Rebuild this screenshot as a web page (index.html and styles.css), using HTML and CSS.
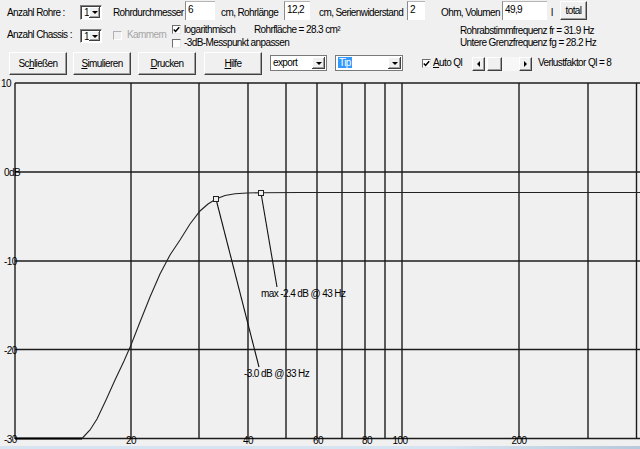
FILE: index.html
```html
<!DOCTYPE html>
<html lang="de">
<head>
<meta charset="utf-8">
<title>Bassreflex Simulation</title>
<link rel="stylesheet" href="styles.css">
</head>
<body>
<div class="toolbar">
  <div class="row r1">
    <span class="lab c-rohre">Anzahl Rohre :</span>
    <div class="combo small"><span class="cval">1</span><span class="dbtn"><i class="arr"></i></span></div>
    <span class="lab c-durch">Rohrdurchmesser</span>
    <span class="field f-durch">6</span>
    <span class="lab c-laenge">cm, Rohrlänge</span>
    <span class="field f-laenge">12,2</span>
    <span class="lab c-serie">cm, Serienwiderstand</span>
    <span class="field f-serie">2</span>
    <span class="lab c-ohm">Ohm, Volumen</span>
    <span class="field f-vol">49,9</span>
    <span class="lab c-l">l</span>
    <button class="btn b-total">total</button>
  </div>
  <div class="row r2">
    <span class="lab c-chassis">Anzahl Chassis :</span>
    <div class="combo small"><span class="cval">1</span><span class="dbtn"><i class="arr"></i></span></div>
    <span class="chk dis c-kam-box"></span>
    <span class="lab c-kam">Kammern</span>
    <div class="col col-mid">
      <div class="line">
        <span class="chk"><svg width="7" height="7" viewBox="0 0 7 7"><path d="M0.8 3.4 L2.6 5.4 L6.2 1.2" fill="none" stroke="#000" stroke-width="1.5"/></svg></span>
        <span class="lab c-log">logarithmisch</span>
        <span class="lab">Rohrfläche = 28.3 cm²</span>
      </div>
      <div class="line">
        <span class="chk"></span>
        <span class="lab c-mess">-3dB-Messpunkt anpassen</span>
      </div>
    </div>
    <div class="col col-right">
      <div class="line2">Rohrabstimmfrequenz fr = 31.9 Hz</div>
      <div class="line2">Untere Grenzfrequenz fg = 28.2 Hz</div>
    </div>
  </div>
  <div class="row r3">
    <button class="btn b-big b-schl">Sc<u>h</u>ließen</button>
    <button class="btn b-big b-sim"><u>S</u>imulieren</button>
    <button class="btn b-big b-dru"><u>D</u>rucken</button>
    <button class="btn b-big b-hil"><u>H</u>ilfe</button>
    <div class="combo wide w-export"><span class="cval">export</span><span class="dbtn"><i class="arr"></i></span></div>
    <div class="combo wide w-tip"><span class="cval"><span class="sel">Tip</span></span><span class="dbtn"><i class="arr"></i></span></div>
    <span class="chk c-auto"><svg width="7" height="7" viewBox="0 0 7 7"><path d="M0.8 3.4 L2.6 5.4 L6.2 1.2" fill="none" stroke="#000" stroke-width="1.5"/></svg></span>
    <span class="lab c-autolab"><u>A</u>uto Ql</span>
    <div class="scroll">
      <span class="sbtn"><i class="tri-l"></i></span>
      <span class="strack s1"></span>
      <span class="sthumb"></span>
      <span class="strack s2"></span>
      <span class="sbtn"><i class="tri-r"></i></span>
    </div>
    <span class="lab c-verl">Verlustfaktor Ql = 8</span>
  </div>
</div>

<svg class="chart" width="640" height="370" viewBox="0 76 640 370">
  <g class="grid">
    <line x1="15" y1="83" x2="640" y2="83"/>
    <line x1="15" y1="172" x2="640" y2="172"/>
    <line x1="15" y1="261" x2="640" y2="261"/>
    <line x1="15" y1="349.5" x2="640" y2="349.5"/>
    <line x1="15" y1="438.5" x2="640" y2="438.5"/>
    <line x1="15" y1="83" x2="15" y2="439"/>
    <line x1="131" y1="83" x2="131" y2="439"/>
    <line x1="199" y1="83" x2="199" y2="439"/>
    <line x1="248" y1="83" x2="248" y2="439"/>
    <line x1="286" y1="83" x2="286" y2="439"/>
    <line x1="317" y1="83" x2="317" y2="439"/>
    <line x1="342" y1="83" x2="342" y2="439"/>
    <line x1="365" y1="83" x2="365" y2="439"/>
    <line x1="385" y1="83" x2="385" y2="439"/>
    <line x1="402" y1="83" x2="402" y2="439"/>
    <line x1="519" y1="83" x2="519" y2="439"/>
    <line x1="588" y1="83" x2="588" y2="439"/>
    <line x1="636.5" y1="83" x2="636.5" y2="439"/>
  </g>
  <g class="ax">
    <text x="1" y="87">10</text>
    <text x="4" y="176">0dB</text>
    <text x="4" y="265">-10</text>
    <text x="4" y="353.5">-20</text>
    <text x="4" y="443">-30</text>
    <text x="131" y="444" text-anchor="middle">20</text>
    <text x="248" y="444" text-anchor="middle">40</text>
    <text x="318" y="444" text-anchor="middle">60</text>
    <text x="367" y="444" text-anchor="middle">80</text>
    <text x="400" y="444" text-anchor="middle">100</text>
    <text x="519" y="444" text-anchor="middle">200</text>
  </g>
  <path class="flat" d="M15 438.5 L82 438.5"/>
  <path class="curve" d="M82 438.5 L90 430 L97 419 L106 400 L115 380 L124 361 L131 345 L140 322 L150 297 L160 274 L170 255 L180 240 L190 224 L200 211 L208 204 L216 199 L225 195.5 L235 193.8 L247 193 L261 192.7 L300 192.5 L640 192.5"/>
  <line class="lead" x1="216" y1="199" x2="259" y2="367"/>
  <line class="lead" x1="261" y1="193" x2="277" y2="287"/>
  <rect class="mark" x="213.5" y="196.5" width="5" height="5"/>
  <rect class="mark" x="258.5" y="190.5" width="5" height="5"/>
  <g class="ax">
    <text x="261" y="296.5">max -2.4 dB @ 43 Hz</text>
    <text x="244" y="377">-3.0 dB @ 33 Hz</text>
  </g>
</svg>
<div class="frame-bottom"></div>
</body>
</html>
```

FILE: styles.css
```css
* { box-sizing: border-box; }

body {
  margin: 0;
  width: 640px;
  height: 449px;
  overflow: hidden;
  background: #f0f0f0;
  font-family: "Liberation Sans", Arial, sans-serif;
  font-size: 10px;
  letter-spacing: -0.6px;
  line-height: 12px;
  color: #000;
}

.toolbar { height: 76px; }

.row { display: flex; align-items: flex-start; }
.r1 { height: 22px; }
.r2 { height: 28px; }
.r3 { height: 26px; }

.lab { white-space: nowrap; }
.r1 > .lab { margin-top: 7px; }

/* row 1 */
.c-rohre { margin-left: 7px; width: 73px; }
.c-durch { margin-left: 11px; width: 72px; }
.c-laenge { margin-left: 6px; width: 63px; }
.c-serie { margin-left: 9px; width: 88px; }
.c-ohm { margin-left: 16px; width: 61px; }
.c-l { margin-left: 4px; width: 9px; }

.field {
  display: block;
  height: 19px;
  margin-top: 1px;
  padding: 2px 0 0 2px;
  background: #fff;
  border-top: 1px solid #b4b4b4;
  border-left: 1px solid #8a8a8a;
  white-space: nowrap;
}
.f-durch { width: 30px; }
.f-laenge { width: 26px; }
.f-serie { width: 18px; }
.f-vol { width: 45px; }

.btn {
  font: inherit;
  letter-spacing: inherit;
  line-height: 12px;
  color: #000;
  background: #f0f0f0;
  border: 1px solid;
  border-color: #ffffff #404040 #404040 #ffffff;
  box-shadow: inset -1px -1px #a0a0a0;
  padding: 0;
  display: flex;
  align-items: center;
  justify-content: center;
}
.b-total { width: 27px; height: 19px; margin-top: 1px; }

/* combos */
.combo {
  display: flex;
  background: #fff;
  border: 1px solid;
  border-color: #808080 #ffffff #ffffff #808080;
}
.combo.small { width: 22px; height: 15px; margin-top: 5px; box-shadow: inset 1px 1px #404040; }
.cval { flex: 1; padding: 1px 0 0 2px; white-space: nowrap; overflow: hidden; }
.combo.small .cval { padding-left: 3px; }
.dbtn {
  width: 11px;
  margin: 1px 1px 1px 0;
  background: #f0f0f0;
  display: flex;
  align-items: center;
  justify-content: center;
  box-shadow: inset -1px -1px #404040, inset 1px 1px #ffffff, inset -2px -2px #a0a0a0;
}
.arr {
  display: block;
  width: 0;
  height: 0;
  border-top: 3px solid #000;
  border-left: 3px solid transparent;
  border-right: 3px solid transparent;
}
.combo.wide {
  height: 16px;
  margin-top: 5px;
  border-color: #7a7a7a;
}
.combo.wide .dbtn { width: 13px; }
.w-export { margin-left: 8px; width: 57px; }
.w-tip { margin-left: 8px; width: 68px; }
.sel { background: #3399ff; color: #fff; padding: 0 1px; }

/* row 2 */
.r2 > .c-chassis { margin-left: 7px; width: 73px; margin-top: 7px; }
.r2 > .combo.small { margin-top: 7px; height: 14px; }

.chk {
  display: flex;
  align-items: center;
  justify-content: center;
  flex: none;
  width: 9px;
  height: 9px;
  background: #fff;
  border: 1px solid;
  border-color: #6e6e6e #e8e8e8 #e8e8e8 #6e6e6e;
}
.chk.dis { background: #f0f0f0; border-color: #b0b0b0 #ffffff #ffffff #b0b0b0; }
.c-kam-box { margin-left: 11px; margin-top: 9px; }
.c-kam { margin-left: 5px; width: 45px; margin-top: 7px; color: #a6a6a6; }

.col { display: flex; flex-direction: column; }
.col-mid { width: 288px; margin-top: 1px; }
.line { display: flex; align-items: center; height: 13.5px; }
.c-log { margin-left: 3px; width: 70px; }
.c-mess { margin-left: 3px; }
.col-right { margin-top: 3px; }
.line2 { height: 12px; white-space: nowrap; }

/* row 3 */
.b-big { width: 58px; height: 23px; margin-top: 2px; }
.b-schl { margin-left: 9px; }
.b-sim { margin-left: 6px; }
.b-dru { margin-left: 7px; }
.b-hil { margin-left: 8px; }
.c-auto { margin-left: 19px; margin-top: 9px; }
.r3 > .lab { margin-top: 7px; }
.c-autolab { margin-left: 2px; width: 39px; }
.c-verl { margin-left: 6px; }

.scroll {
  display: flex;
  width: 60px;
  height: 14px;
  margin-top: 7px;
  background: #f7f7f7;
}
.sbtn, .sthumb {
  display: flex;
  align-items: center;
  justify-content: center;
  background: #f0f0f0;
  border: 1px solid;
  border-color: #ffffff #404040 #404040 #ffffff;
  box-shadow: inset -1px -1px #a0a0a0;
}
.sbtn { width: 13px; }
.sthumb { width: 15px; }
.s1 { width: 2px; }
.s2 { width: 17px; }
.tri-l, .tri-r { display: block; width: 0; height: 0; border-top: 3px solid transparent; border-bottom: 3px solid transparent; }
.tri-l { border-right: 3px solid #000; }
.tri-r { border-left: 3px solid #000; }

/* chart */
.chart { display: block; }
.grid line { stroke: #1c1c1c; stroke-width: 1.4; }
.ax text { font-family: "Liberation Sans", Arial, sans-serif; font-size: 10px; letter-spacing: -0.6px; fill: #000; }
.flat { stroke: #000; stroke-width: 2; fill: none; }
.curve { stroke: #222; stroke-width: 1.1; fill: none; }
.lead { stroke: #111; stroke-width: 1.1; }
.mark { fill: #f0f0f0; stroke: #222; stroke-width: 1; }

.frame-bottom {
  height: 3px;
  background: linear-gradient(90deg, #d6e3f0 0%, #d6e3f0 70%, #b8c9db 100%);
}
```
